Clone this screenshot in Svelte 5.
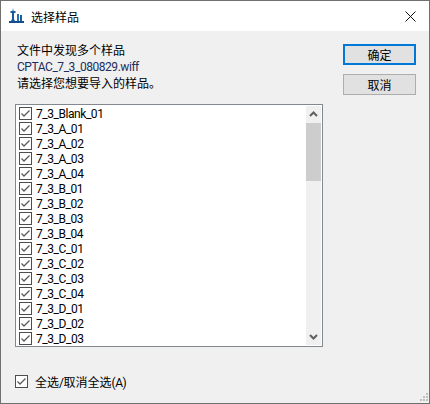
<script lang="ts">
    const groups = ['A', 'B', 'C', 'D'];
    const samples = ['7_3_Blank_01'];
    for (const g of groups) {
        for (let i = 1; i <= 4; i++) {
            if (g === 'D' && i === 4) continue;
            samples.push(`7_3_${g}_0${i}`);
        }
    }
</script>

{#snippet check()}
    <svg class="check" width="13" height="13" viewBox="0 0 13 13">
        <rect x="0.5" y="0.5" width="12" height="12" fill="#fff" stroke="#4d4d4d" />
        <path d="M2.5 6.5 L5 9 L10.5 3.5" fill="none" stroke="#5a5a5a" stroke-width="1.3" />
    </svg>
{/snippet}

<div class="window">
    <header class="titlebar">
        <svg class="logo" width="16" height="16" viewBox="0 0 16 16">
            <path d="M4 0 L4.6 3 H6.5 V5 H5 V11 L6 13 H2 L3 11 V5 H1.5 V3 H3.4 Z" fill="#1a5a9e" />
            <rect x="8" y="6" width="2" height="7" fill="#2a6fb0" />
            <rect x="11" y="7" width="2" height="6" fill="#1a5a9e" />
            <rect x="0" y="13" width="15" height="2" fill="#114f91" />
        </svg>
        <span class="title">选择样品</span>
        <svg class="close" width="11" height="11" viewBox="0 0 11 11">
            <path d="M0.5 0.5 L10.5 10.5 M10.5 0.5 L0.5 10.5" stroke="#111" fill="none" />
        </svg>
    </header>

    <main class="body">
        <div class="top">
            <div class="message">
                <div>文件中发现多个样品</div>
                <div class="file latin">CPTAC_7_3_080829.wiff</div>
                <div class="prompt">请选择您想要导入的样品。</div>
            </div>
            <div class="buttons">
                <button class="primary">确定</button>
                <button>取消</button>
            </div>
        </div>

        <div class="list">
            <div class="rows">
                {#each samples as s}
                    <div class="row">
                        {@render check()}
                        <span class="latin">{s}</span>
                    </div>
                {/each}
            </div>
            <div class="scrollbar">
                <svg width="15" height="17" viewBox="0 0 15 17">
                    <path d="M4 10 L7.5 6.5 L11 10" fill="none" stroke="#606060" stroke-width="2" />
                </svg>
                <div class="thumb"></div>
                <div class="track"></div>
                <svg width="15" height="17" viewBox="0 0 15 17">
                    <path d="M4 7 L7.5 10.5 L11 7" fill="none" stroke="#606060" stroke-width="2" />
                </svg>
            </div>
        </div>

        <label class="all">
            {@render check()}
            <span>全选<span class="latin">/</span>取消全选<span class="latin">(A)</span></span>
        </label>
    </main>

    <svg class="grip" width="8" height="8" viewBox="0 0 8 8">
        <path d="M6 0h2v2H6zM3 3h2v2H3zM6 3h2v2H6zM0 6h2v2H0zM3 6h2v2H3zM6 6h2v2H6z" fill="#bfbfbf" />
    </svg>
</div>

<style>
    :global(body) {
        margin: 0;
    }

    .window {
        position: relative;
        box-sizing: border-box;
        width: 430px;
        height: 404px;
        border: 1px solid #707070;
        background: #f0f0f0;
        display: flex;
        flex-direction: column;
        font-family: "Noto Sans CJK SC", "Liberation Sans", sans-serif;
        font-size: 12px;
        color: #000;
    }

    .titlebar {
        height: 30px;
        flex: none;
        background: #fff;
        display: flex;
        align-items: center;
        padding: 0 13px 0 8px;
    }

    .logo {
        flex: none;
    }

    .title {
        margin-left: 6px;
        flex: 1;
    }

    .body {
        flex: 1;
        display: flex;
        flex-direction: column;
        padding: 8px 13px 0 14px;
    }

    .top {
        display: flex;
        justify-content: space-between;
        height: 65px;
    }

    .message {
        padding: 3px 0 0 2px;
        line-height: 16px;
    }

    .latin {
        font-family: Roboto, "Liberation Sans", sans-serif;
        letter-spacing: -0.45px;
    }

    .file {
        color: #1c2e5c;
        padding-top: 1px;
    }

    .buttons {
        display: flex;
        flex-direction: column;
        gap: 9px;
        padding-top: 5px;
    }

    button {
        box-sizing: border-box;
        width: 73px;
        height: 21px;
        padding: 0;
        background: #e1e1e1;
        border: 1px solid #adadad;
        font: inherit;
        color: #000;
    }

    .primary {
        border: 2px solid #0078d7;
    }

    .list {
        box-sizing: border-box;
        width: 308px;
        height: 243px;
        border: 1px solid #828790;
        background: #fff;
        display: flex;
        padding: 1px;
    }

    .rows {
        flex: 1;
        overflow: hidden;
        padding: 0 0 0 2px;
    }

    .row {
        display: flex;
        align-items: center;
        gap: 4px;
        height: 15px;
    }

    .check {
        flex: none;
    }

    .scrollbar {
        width: 15px;
        flex: none;
        background: #f0f0f0;
        display: flex;
        flex-direction: column;
    }

    .scrollbar svg {
        flex: none;
    }

    .thumb {
        height: 58px;
        flex: none;
        background: #cdcdcd;
    }

    .track {
        flex: 1;
    }

    .all {
        display: flex;
        align-items: center;
        gap: 7px;
        margin-top: 26px;
    }

    .grip {
        position: absolute;
        right: 1px;
        bottom: 2px;
    }
</style>
